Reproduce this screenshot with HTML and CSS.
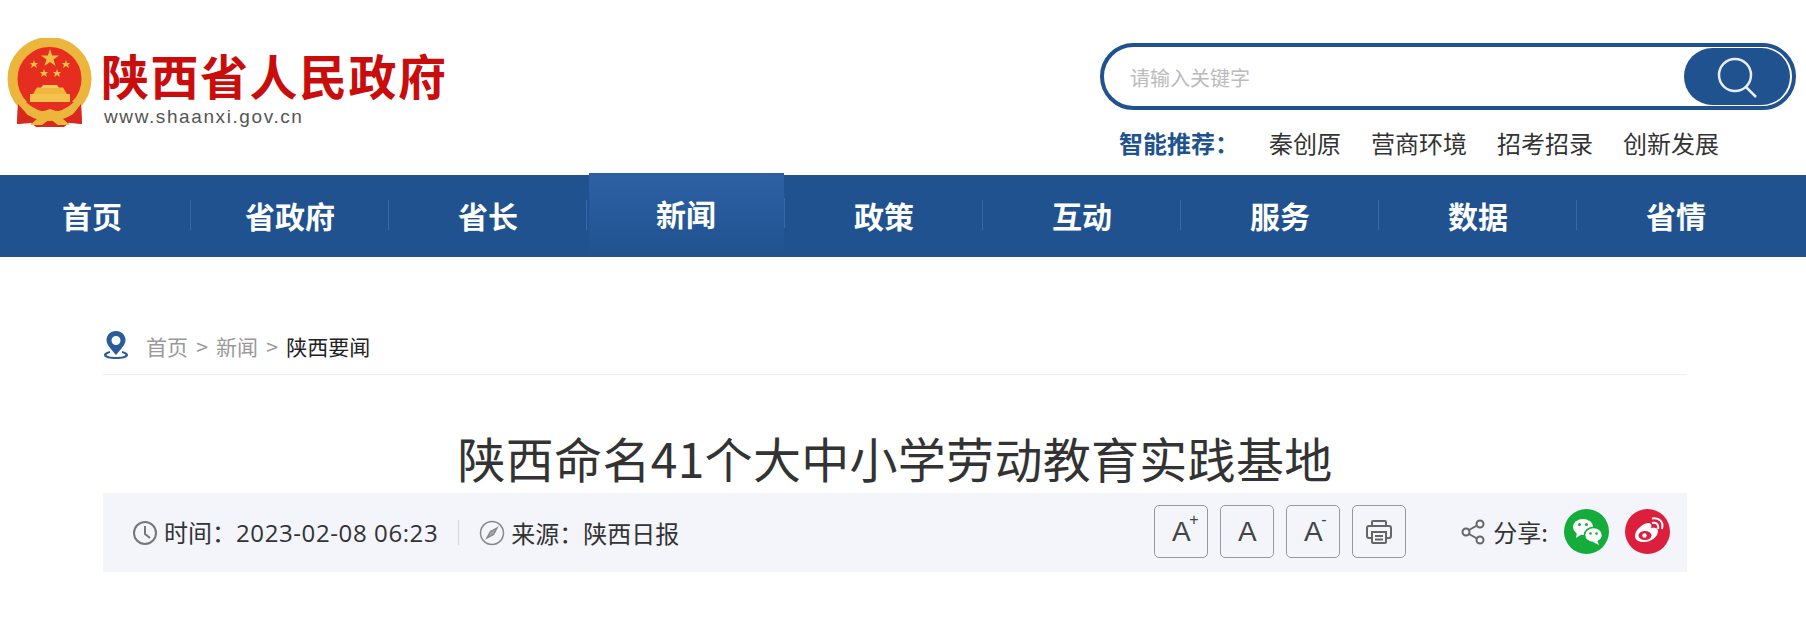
FILE: index.html
```html
<!DOCTYPE html>
<html lang="zh-CN">
<head>
    <meta charset="UTF-8">
    <title>陕西命名41个大中小学劳动教育实践基地</title>
    <link rel="stylesheet" href="styles.css">
</head>
<body>
    <header class="top">
        <div class="logo">
            <svg class="emblem" viewBox="7 38 86 90" width="86" height="90">
                <path d="M18 104 L17 124 L30 122 L36 127 L64 127 L70 122 L82 124 L81 104 Z" fill="#d9281e"/>
                <circle cx="49.500" cy="79" r="37" fill="#e62e20" stroke="#ecb63c" stroke-width="10"/>
                <path d="M30 94 H70 V102 H30 Z" fill="#f2c24c"/>
                <path d="M37 87.500 H63 L67 94 H33 Z" fill="#eeb840"/>
                <path d="M43 85 H57 L59 88 H41 Z" fill="#f4cb5e"/>
                <path d="M26 102 H74 Q64 112 50 112 Q36 112 26 102 Z" fill="#e62e20"/>
                <path d="M50 49 L52.200 55.500 H59 L53.500 59.500 L55.600 66 L50 62 L44.400 66 L46.500 59.500 L41 55.500 H47.800 Z" fill="#f0c040"/>
                <path d="M34 60 L35 63 H38 L36 65 L37 68 L34 66 L31 68 L32 65 L30 63 H33 Z" fill="#f0c040"/>
                <path d="M66 60 L67 63 H70 L68 65 L69 68 L66 66 L63 68 L64 65 L62 63 H65 Z" fill="#f0c040"/>
                <path d="M44 69 L45 72 H48 L46 74 L47 77 L44 75 L41 77 L42 74 L40 72 H43 Z" fill="#f0c040"/>
                <path d="M57 69 L58 72 H61 L59 74 L60 77 L57 75 L54 77 L55 74 L53 72 H56 Z" fill="#f0c040"/>
                <path d="M22 102 Q34 116 50 109 Q66 116 78 102 L80 106 Q72 118 62 118 L70 125 H58 L50 119 L42 125 H30 L38 118 Q28 118 20 106 Z" fill="#ecb63c"/>
                <path d="M18 104 L26 113 L31 123 L17 124 Z M81 104 L74 113 L69 123 L82 124 Z" fill="#d9281e"/>
            </svg>
            <div class="logo-text">
                <div class="logo-name">陕西省人民政府</div>
                <div class="logo-url">www.shaanxi.gov.cn</div>
            </div>
        </div>
        <div class="top-right">
            <div class="search">
                <span class="search-hint">请输入关键字</span>
                <div class="search-btn">
                    <svg viewBox="0 0 44 44" width="44" height="44" fill="none" stroke="#e8edf4" stroke-width="2.500">
                        <circle cx="20" cy="20" r="16"/>
                        <path d="M31 32 L41 42"/>
                    </svg>
                </div>
            </div>
            <div class="hot">
                <b>智能推荐：</b>
                <a>秦创原</a>
                <a>营商环境</a>
                <a>招考招录</a>
                <a>创新发展</a>
            </div>
        </div>
    </header>

    <nav class="nav">
        <a>首页</a>
        <a>省政府</a>
        <a>省长</a>
        <a class="active">新闻</a>
        <a>政策</a>
        <a>互动</a>
        <a>服务</a>
        <a>数据</a>
        <a>省情</a>
    </nav>

    <main class="content">
        <div class="crumb">
            <svg viewBox="0 0 26 30" width="26" height="30">
                <path d="M7 21 C2 22 1 24 1 25 C1 28 7 29 13 29 C19 29 25 28 25 25 C25 24 24 22 19 21 L19 23 C21 23.500 22.500 24.500 22.500 25 C22.500 26 18 27 13 27 C8 27 3.500 26 3.500 25 C3.500 24.500 5 23.500 7 23 Z" fill="#2a5c9a"/>
                <path fill-rule="evenodd" d="M13 1 C7 1 3.500 5.500 3.500 10 C3.500 15 9 20 13 25 C17 20 22.500 15 22.500 10 C22.500 5.500 19 1 13 1 Z M13 6 A4.500 4.500 0 1 1 13 15 A4.500 4.500 0 1 1 13 6 Z" fill="#2a5c9a"/>
            </svg>
            <span class="crumb-text">首页 &gt; 新闻 &gt; <em>陕西要闻</em></span>
        </div>

        <h1 class="title">陕西命名41个大中小学劳动教育实践基地</h1>

        <div class="meta">
            <div class="meta-left">
                <svg viewBox="0 0 26 26" width="26" height="26" fill="none" stroke="#777" stroke-width="2">
                    <circle cx="13" cy="13" r="11"/>
                    <path d="M13 6 V14 L18 18"/>
                </svg>
                <span class="meta-text">时间：<span class="meta-date">2023-02-08 06:23</span></span>
                <i class="meta-line"></i>
                <svg viewBox="0 0 26 26" width="26" height="26" fill="none" stroke="#888" stroke-width="1.500">
                    <circle cx="13" cy="13" r="11.500"/>
                    <path d="M18 8 L14.500 14.500 L8 18 L11.500 11.500 Z" fill="#aaa"/>
                </svg>
                <span class="meta-text">来源：陕西日报</span>
            </div>
            <div class="meta-right">
                <div class="tools">
                    <span class="tool">A<sup>+</sup></span>
                    <span class="tool">A</span>
                    <span class="tool">A<sup>-</sup></span>
                    <span class="tool">
                        <svg viewBox="0 0 26 26" width="26" height="26" fill="none" stroke="#666" stroke-width="2">
                            <path d="M6 7 V3 Q6 2 7 2 H19 Q20 2 20 3 V7"/>
                            <path d="M6 19 H3 Q1 19 1 17 V9 Q1 7 3 7 H23 Q25 7 25 9 V17 Q25 19 23 19 H20"/>
                            <path d="M6 13 H20 V23 Q20 24 19 24 H7 Q6 24 6 23 Z"/>
                            <path d="M9 17 H17 M9 20.500 H17"/>
                        </svg>
                    </span>
                </div>
                <div class="share">
                    <svg viewBox="0 0 24 26" width="24" height="26" fill="none" stroke="#666" stroke-width="2">
                        <circle cx="5" cy="13" r="3.500"/>
                        <circle cx="19" cy="5" r="3.500"/>
                        <circle cx="19" cy="21" r="3.500"/>
                        <path d="M8 11 L16 6.500 M8 15 L16 19.500"/>
                    </svg>
                    <span class="meta-text">分享:</span>
                    <span class="share-btn wechat">
                        <svg viewBox="0 0 45 45" width="45" height="45" fill="#fff">
                            <ellipse cx="19" cy="18" rx="10" ry="8"/>
                            <path d="M13 23 L12 29 L18 25 Z"/>
                            <ellipse cx="29.500" cy="26" rx="9" ry="7.500" stroke="#14ac3a" stroke-width="1.500"/>
                            <path d="M33 31 L35 36 L29 33 Z"/>
                            <circle cx="15.500" cy="15.500" r="1.500" fill="#14ac3a"/>
                            <circle cx="22.500" cy="15.500" r="1.500" fill="#14ac3a"/>
                            <circle cx="26.500" cy="24.500" r="1.300" fill="#14ac3a"/>
                            <circle cx="32.500" cy="24.500" r="1.300" fill="#14ac3a"/>
                        </svg>
                    </span>
                    <span class="share-btn weibo">
                        <svg viewBox="0 0 45 45" width="45" height="45">
                            <path d="M10 27 C10 21 17 15 23 14 C26 14 27 16 26 19 C30 18 33 19 33 22 C33 28 26 33 19 33 C14 33 10 31 10 27 Z" fill="#fff"/>
                            <ellipse cx="20" cy="26.500" rx="6.500" ry="4.500" fill="#dc1f3c"/>
                            <circle cx="19.500" cy="26.500" r="2.200" fill="#fff"/>
                            <path d="M27 14 C31 13 34 15 33 20 M27 9.500 C34 8 39 13 37 20" fill="none" stroke="#fff" stroke-width="2"/>
                        </svg>
                    </span>
                </div>
            </div>
        </div>
    </main>
</body>
</html>
```

FILE: styles.css
```css
body {
    margin: 0;
    background: #fff;
    color: #333;
    font-family: "Noto Sans CJK SC", "Liberation Sans", sans-serif;
}
a {
    color: inherit;
}

/* header */
.top {
    display: flex;
    justify-content: space-between;
    height: 175px;
    box-sizing: border-box;
}
.logo {
    display: flex;
    padding: 38px 0 0 7px;
}
.emblem {
    display: block;
}
.logo-text {
    margin-left: 8px;
    padding-top: 11px;
}
.logo-name {
    font-size: 48px;
    line-height: 50px;
    font-weight: 700;
    letter-spacing: 1.500px;
    color: #c90d0d;
}
.logo-url {
    margin: 7px 0 0 3px;
    font-family: "Liberation Sans", sans-serif;
    font-size: 19px;
    line-height: 22px;
    letter-spacing: 1.600px;
    color: #555;
}
.top-right {
    width: 696px;
    margin-right: 10px;
    padding-top: 43px;
}
.search {
    display: flex;
    align-items: center;
    justify-content: space-between;
    height: 67px;
    box-sizing: border-box;
    border: 4px solid #20528f;
    border-radius: 34px;
    padding: 0 2px 0 26px;
}
.search-hint {
    padding-top: 2px;
    font-size: 20px;
    color: #bbb;
}
.search-btn {
    display: flex;
    align-items: center;
    justify-content: center;
    width: 106px;
    height: 57px;
    border-radius: 29px;
    background: #20528f;
    box-shadow: 0 0 0 1px #fff;
}
.hot {
    display: flex;
    gap: 30px;
    margin: 15px 0 0 19px;
    font-size: 24px;
    line-height: 36px;
}
.hot b {
    color: #20528f;
}

/* nav */
.nav {
    display: flex;
    height: 82px;
    background: #20528f;
}
.nav a {
    flex: 0 0 198px;
    position: relative;
    text-align: center;
    font-size: 30px;
    font-weight: 700;
    line-height: 80px;
    color: #fff;
}
.nav a:first-child {
    margin-left: -7px;
}
.nav a::after {
    content: "";
    position: absolute;
    right: 0;
    top: 25px;
    height: 30px;
    width: 1px;
    background: #386aa6;
}
.nav a:last-child::after {
    display: none;
}
.nav .active {
    margin-top: -2px;
    height: 84px;
    line-height: 80px;
    background: linear-gradient(#2d61a5, #20528f) 2px 0 / 195px 100% no-repeat;
}

/* article head */
.content {
    margin: 0 119px 0 103px;
}
.crumb {
    display: flex;
    align-items: center;
    height: 118px;
    box-sizing: border-box;
    border-bottom: 1px solid #eee;
    padding-top: 70px;
    padding-bottom: 12px;
}
.crumb-text {
    margin: 3px 0 0 17px;
    font-size: 21px;
    word-spacing: 3.500px;
    color: #999;
}
.crumb-text em {
    font-style: normal;
    color: #222;
}
.title {
    margin: 50px 0 0;
    height: 68px;
    text-align: center;
    font-size: 48px;
    line-height: 64px;
    letter-spacing: 0.300px;
    font-weight: 400;
    color: #333;
}
.meta {
    display: flex;
    align-items: center;
    justify-content: space-between;
    height: 79px;
    padding: 0 17px 0 29px;
    background: #f3f5fb;
}
.meta-left {
    display: flex;
    align-items: center;
}
.meta-text {
    margin-left: 6px;
    font-size: 24px;
    line-height: 32px;
    color: #333;
}
.meta-date {
    font-family: "Open Sans", "Noto Sans CJK SC", sans-serif;
    letter-spacing: 0.600px;
}
.meta-line {
    width: 1px;
    height: 25px;
    margin: 0 20px;
    background: #d5d7dc;
}
.meta-right {
    display: flex;
    align-items: center;
    margin-top: -2px;
}
.tools {
    display: flex;
    gap: 12px;
}
.tool {
    position: relative;
    display: flex;
    align-items: center;
    justify-content: center;
    width: 54px;
    height: 53px;
    box-sizing: border-box;
    border: 1px solid #999;
    border-radius: 5px;
    font-family: "Liberation Sans", sans-serif;
    font-size: 28px;
    color: #444;
}
.tool sup {
    position: absolute;
    left: 34px;
    top: 6px;
    font-size: 16px;
    line-height: 1;
}
.share {
    display: flex;
    align-items: center;
    margin-left: 55px;
}
.share .meta-text {
    margin-left: 8px;
}
.share-btn {
    display: block;
    width: 45px;
    height: 45px;
    border-radius: 50%;
    margin-left: 16px;
}
.share-btn svg {
    display: block;
}
.wechat {
    background: #14ac3a;
}
.weibo {
    background: #dc1f3c;
}
```
